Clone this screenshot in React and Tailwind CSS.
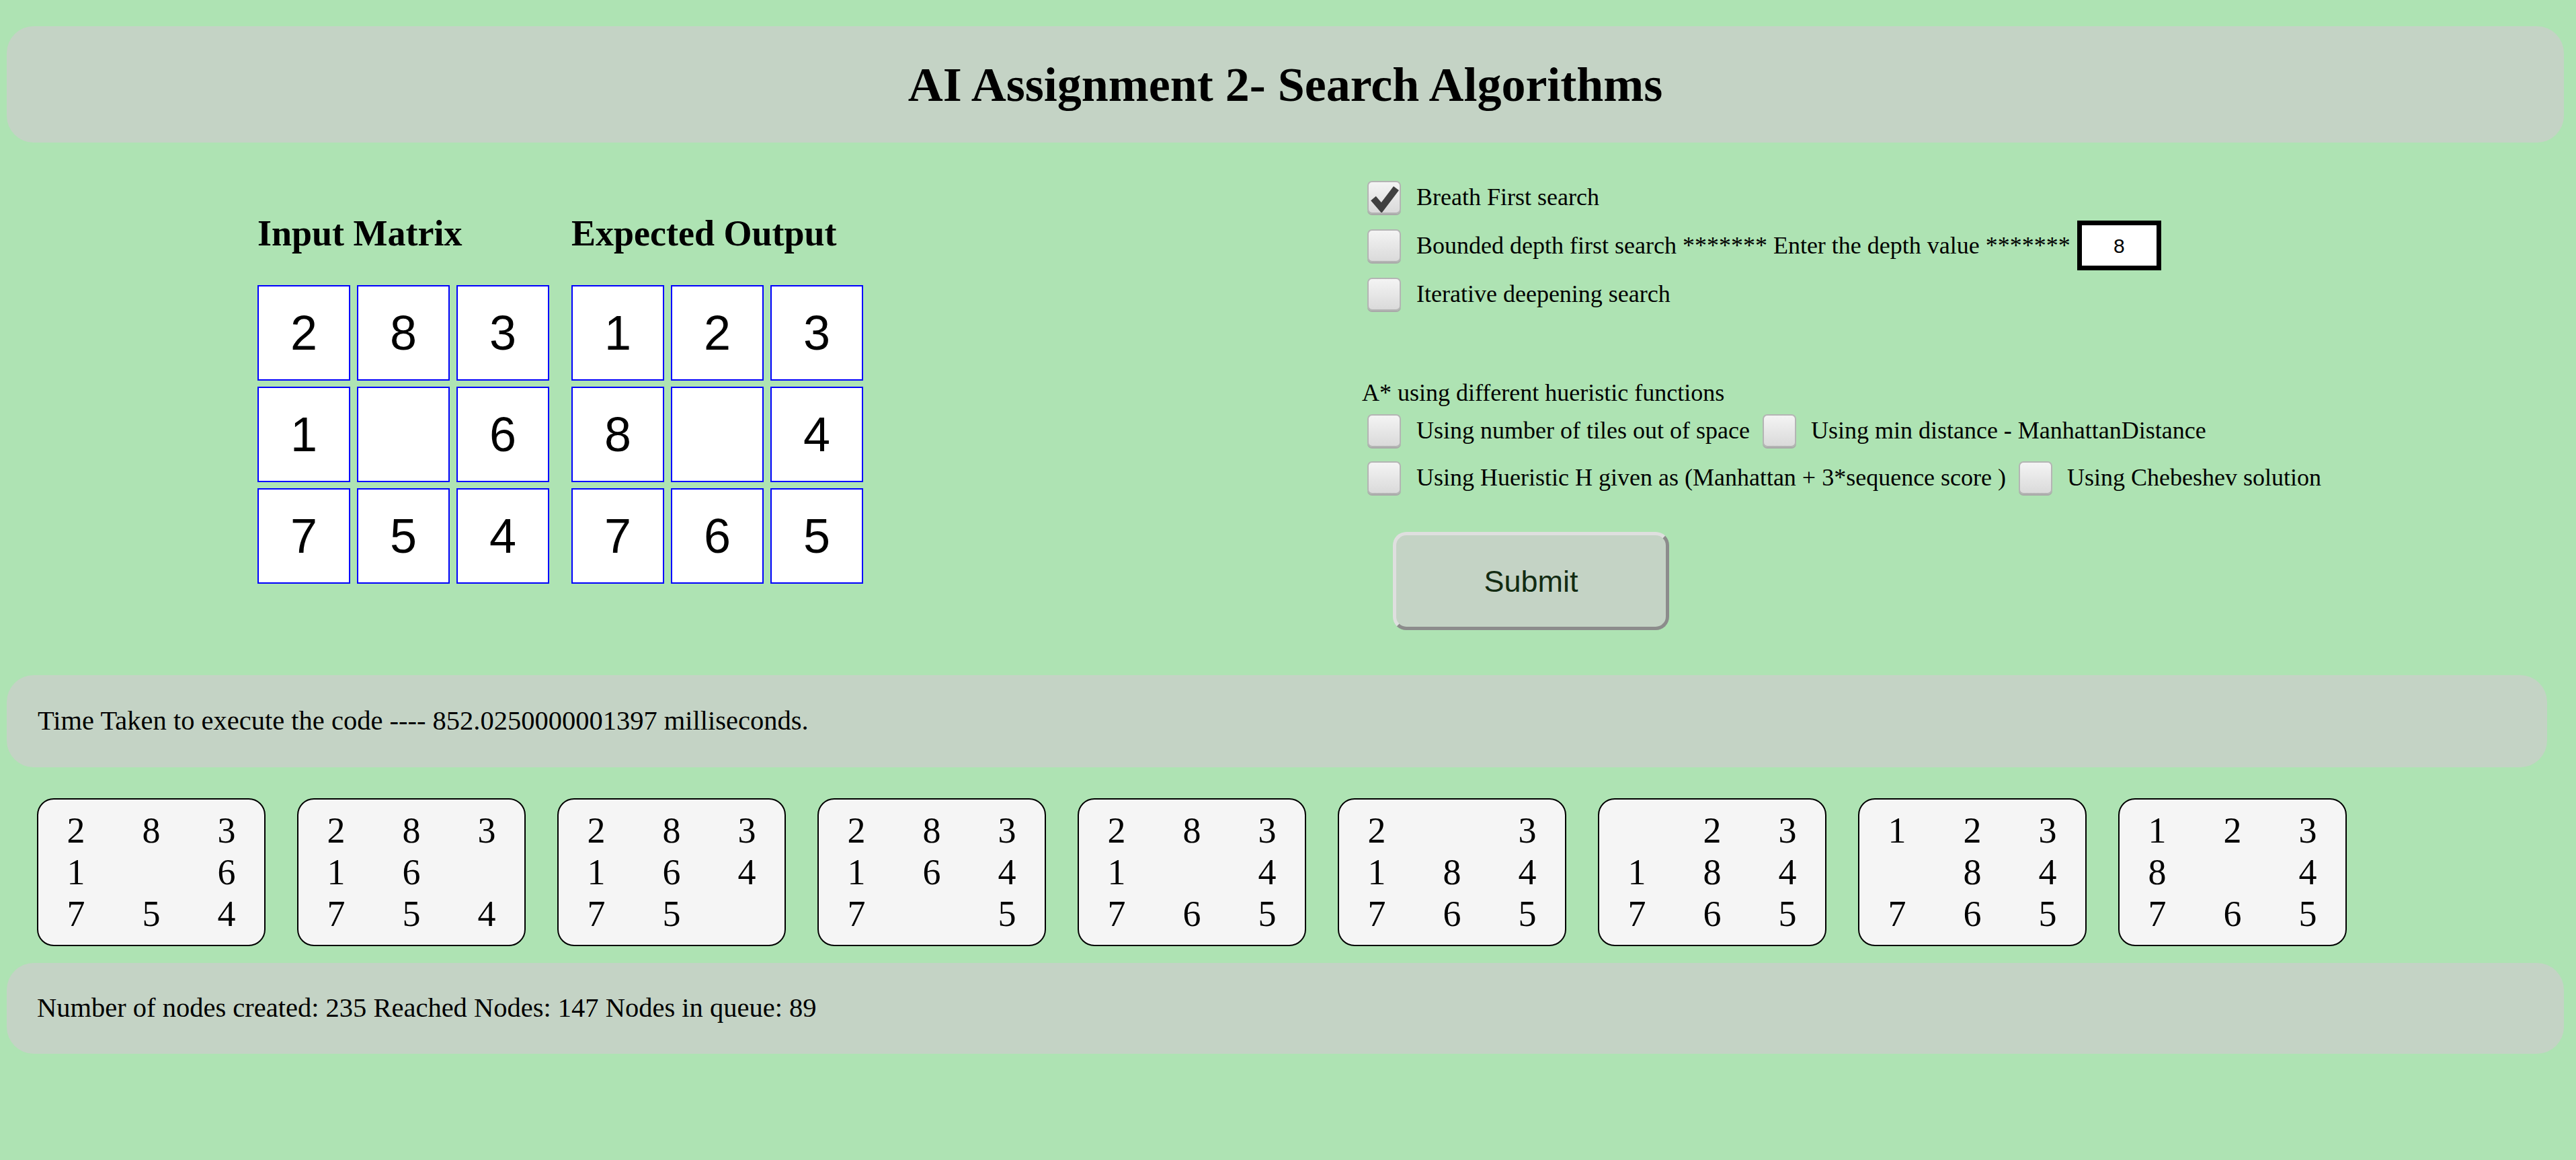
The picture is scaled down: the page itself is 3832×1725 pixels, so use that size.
// App.jsx

const inputMatrix = ['2', '8', '3', '1', '', '6', '7', '5', '4'];
const expectedMatrix = ['1', '2', '3', '8', '', '4', '7', '6', '5'];

const steps = [
  ['2', '8', '3', '1', '', '6', '7', '5', '4'],
  ['2', '8', '3', '1', '6', '', '7', '5', '4'],
  ['2', '8', '3', '1', '6', '4', '7', '5', ''],
  ['2', '8', '3', '1', '6', '4', '7', '', '5'],
  ['2', '8', '3', '1', '', '4', '7', '6', '5'],
  ['2', '', '3', '1', '8', '4', '7', '6', '5'],
  ['', '2', '3', '1', '8', '4', '7', '6', '5'],
  ['1', '2', '3', '', '8', '4', '7', '6', '5'],
  ['1', '2', '3', '8', '', '4', '7', '6', '5'],
];

function CheckBox({ checked }) {
  return (
    <span className="flex h-[49px] w-[50px] shrink-0 items-center justify-center rounded-[7px] border-2 border-[#b4b4b4] bg-linear-to-b from-[#f4f4f4] to-[#dadada] shadow-[0_2px_0_#a9a9a9]">
      {checked && (
        <svg width="46" height="45" viewBox="0 0 46 45">
          <path d="M7 24 L19 38 L41 9" fill="none" stroke="#404040" strokeWidth="10" strokeLinejoin="miter" />
        </svg>
      )}
    </span>
  );
}

function Matrix({ title, cells }) {
  return (
    <div>
      <h2 className="text-[54px] font-bold leading-[62px]">{title}</h2>
      <div className="mt-[46px] grid grid-cols-[repeat(3,138px)] gap-x-[10px] gap-y-[9px]">
        {cells.map((c, i) => (
          <div
            key={i}
            className="flex h-[142px] items-center justify-center border-2 border-[#0000ff] bg-white font-['Liberation_Sans',Arial,sans-serif] text-[72px] leading-none"
          >
            {c}
          </div>
        ))}
      </div>
    </div>
  );
}

function StepCard({ cells }) {
  return (
    <div className="grid w-[340px] shrink-0 grid-cols-3 rounded-[25px] border-2 border-black bg-[#f5f5f5] py-[15px] text-center text-[54px] leading-[62px]">
      {cells.map((c, i) => (
        <span key={i}>{c}</span>
      ))}
    </div>
  );
}

export default function App() {
  return (
    <div className="min-h-screen w-full overflow-hidden bg-[#aee3b3] pt-[39px] font-['Liberation_Serif','Times_New_Roman',serif] text-black">
      <header className="ml-[10px] mr-[18px] flex h-[173px] items-center justify-center rounded-[40px] bg-[#c4d3c5]">
        <h1 className="text-[72px] font-bold">AI Assignment 2- Search Algorithms</h1>
      </header>

      <section className="flex">
        <div className="flex w-[2026px] shrink-0 gap-[33px] pl-[383px] pt-[104px]">
          <Matrix title="Input Matrix" cells={inputMatrix} />
          <Matrix title="Expected Output" cells={expectedMatrix} />
        </div>

        <div className="pt-[45px] text-[36px] leading-[41px]">
          <div className="flex h-[72px] items-center pl-[8px]">
            <CheckBox checked />
            <span className="ml-[23px]">Breath First search</span>
          </div>
          <div className="flex h-[72px] items-center pl-[8px]">
            <CheckBox />
            <span className="ml-[23px]">Bounded depth first search ******* Enter the depth value *******</span>
            <div className="ml-[10px] flex h-[74px] w-[125px] items-center justify-center border-[7px] border-black bg-white font-['Liberation_Sans',Arial,sans-serif] text-[30px]">
              8
            </div>
          </div>
          <div className="flex h-[72px] items-center pl-[8px]">
            <CheckBox />
            <span className="ml-[23px]">Iterative deepening search</span>
          </div>

          <p className="mt-[91px]">A* using different hueristic functions</p>
          <div className="flex h-[70px] items-center pl-[8px]">
            <CheckBox />
            <span className="ml-[23px] mr-[19px]">Using number of tiles out of space</span>
            <CheckBox />
            <span className="ml-[22px]">Using min distance - ManhattanDistance</span>
          </div>
          <div className="flex h-[70px] items-center pl-[8px]">
            <CheckBox />
            <span className="ml-[23px] mr-[19px]">Using Hueristic H given as (Manhattan + 3*sequence score )</span>
            <CheckBox />
            <span className="ml-[22px]">Using Chebeshev solution</span>
          </div>

          <button className="ml-[46px] mt-[46px] h-[146px] w-[411px] rounded-[20px] border-[5px] border-b-[#8c8c8c] border-l-[#dfdfdf] border-r-[#8c8c8c] border-t-[#dfdfdf] bg-[#c4d3c5] font-['Liberation_Sans',Arial,sans-serif] text-[45px] text-[#122b12]">
            Submit
          </button>
        </div>
      </section>

      <div className="ml-[10px] mr-[43px] mt-[67px] flex h-[137px] items-center rounded-[40px] bg-[#c4d3c5] pl-[46px] text-[40.5px]">
        Time Taken to execute the code ---- 852.0250000001397 milliseconds.
      </div>

      <div className="mt-[46px] flex gap-[47px] pl-[55px]">
        {steps.map((s, i) => (
          <StepCard key={i} cells={s} />
        ))}
      </div>

      <div className="ml-[10px] mr-[18px] mt-[25px] flex h-[135px] items-center rounded-[40px] bg-[#c4d3c5] pl-[45px] text-[40.5px]">
        Number of nodes created: 235 Reached Nodes: 147 Nodes in queue: 89
      </div>
    </div>
  );
}
